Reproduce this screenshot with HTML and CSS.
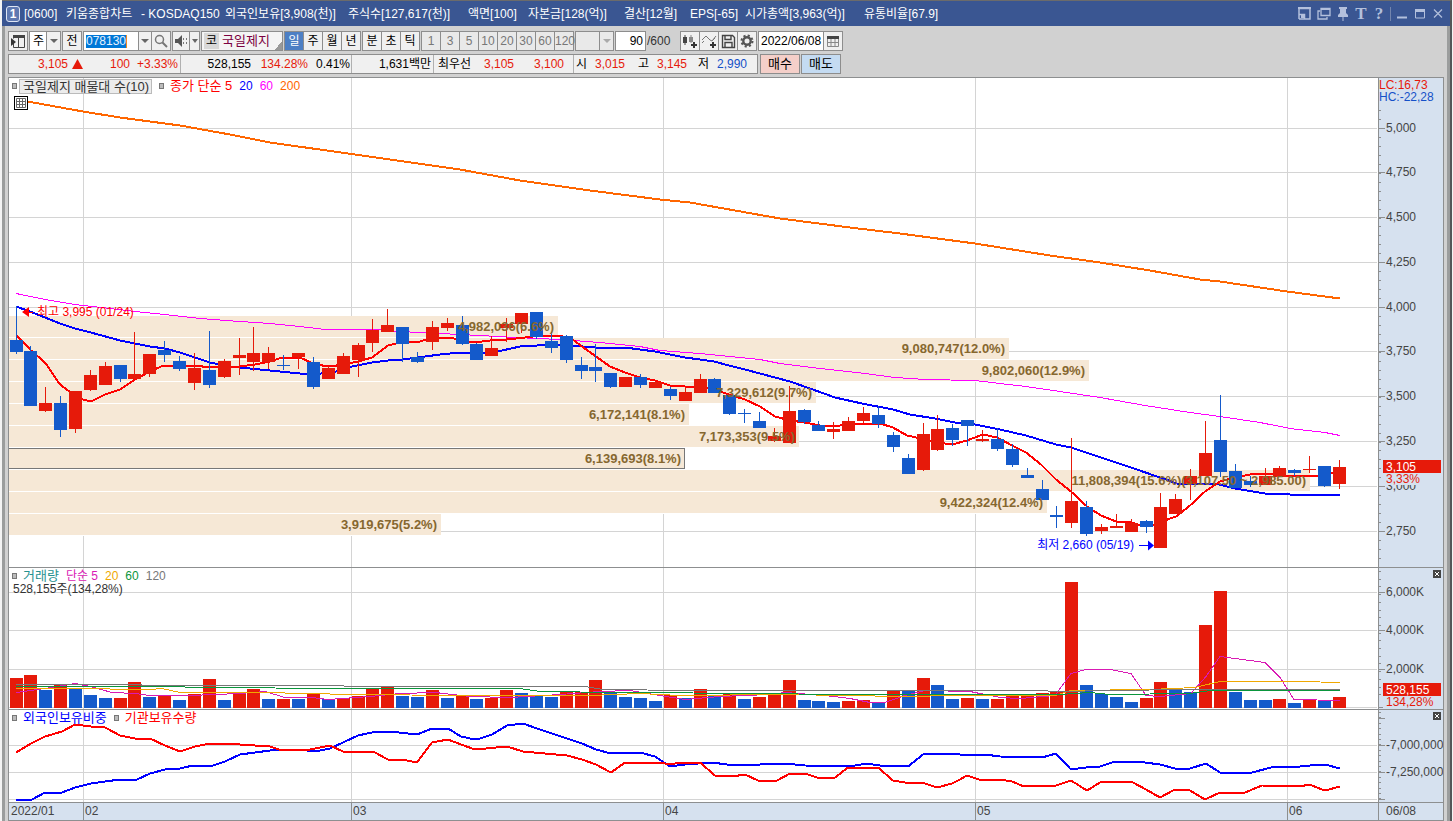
FILE: index.html
```html
<!DOCTYPE html>
<html lang="ko">
<head>
<meta charset="utf-8">
<title>키움종합차트</title>
<link rel="stylesheet" href="styles.css">
</head>
<body>
<div class="window">
  <header class="titlebar">
    <span class="win-no">1</span>
    <h1 class="title">
      <span>[0600]</span><span>키움종합차트</span><span>- KOSDAQ150</span><span>외국인보유[3,908(천)]</span><span>주식수[127,617(천)]</span><span>액면[100]</span><span>자본금[128(억)]</span><span>결산[12월]</span><span>EPS[-65]</span><span>시가총액[3,963(억)]</span><span>유통비율[67.9]</span>
    </h1>
    <div class="win-tools">
      <button aria-label="도킹"><svg width="13" height="13"><path d="M1 12V1.500H12V12H6.500M1 7.500H6.500V12H1" fill="none" stroke="currentColor" stroke-width="1.5"/><path d="M0 0h13v2H0zM3 8h3v3H3z" fill="currentColor"/></svg></button>
      <button aria-label="창 복제"><svg width="14" height="13"><path d="M4 1.5h9v7H4zM3 4H1v8h9v-2" fill="none" stroke="currentColor" stroke-width="1.3"/><path d="M4 1h9v2H4z" fill="currentColor"/></svg></button>
      <button aria-label="고정"><svg width="12" height="14"><path d="M2 0h8v2H9v4l2 2v2H1V8l2-2V2H2zM5.5 10h1v4h-1z" fill="currentColor"/></svg></button>
      <button class="glyph" aria-label="글꼴">T</button>
      <button class="glyph" aria-label="도움말">?</button>
      <i class="split"></i>
      <button aria-label="최소화"><svg width="12" height="13"><path d="M1 9.5h10v2H1z" fill="currentColor"/></svg></button>
      <button aria-label="최대화"><svg width="12" height="13"><path d="M1.5 3h9v8h-9z" fill="none" stroke="currentColor"/><path d="M1 2h10v3H1z" fill="currentColor"/></svg></button>
      <button aria-label="닫기"><svg width="12" height="13"><path d="M2 2.5l8 8M10 2.5l-8 8" stroke="currentColor" stroke-width="1.2"/></svg></button>
    </div>
  </header>

  <main class="content">
    <div class="toolbar">
      <div class="row">
        <button class="btn w20" aria-label="목록 열기"><svg width="16" height="14"><path d="M3.5 9v4.500h11v-12h-11v3M8.500 3v10" fill="none" stroke="#444"/><path d="M3 1h12v3H3z" fill="#444"/><path d="M1 4l5 4-5 4z" fill="#333"/></svg></button>
        <span class="combo w31"><select aria-label="종목 구분"><option>주</option></select><i class="arrow"></i></span>
        <button class="btn w20">전</button>
        <div class="group">
          <label class="code"><input type="text" value="078130" aria-label="종목코드"></label>
          <button class="btn w14" aria-label="종목 목록"><i class="tri"></i></button>
          <button class="btn w20" aria-label="검색"><svg width="14" height="14"><circle cx="5.5" cy="5.5" r="4" fill="none" stroke="#777" stroke-width="1.5"/><path d="M8.5 8.5l4.500 4.500" stroke="#777" stroke-width="2"/></svg></button>
        </div>
        <div class="group">
          <button class="btn w18" aria-label="음성"><svg width="14" height="12"><path d="M1 4h3l4-4v12L4 8H1z" fill="#555"/><path d="M9 3h1v2H9zM9 7h1v2H9zM12 3h1v2h-1zM12 7h1v2h-1z" fill="#777"/></svg></button>
          <button class="btn w11" aria-label="음성 설정"><i class="tri small"></i></button>
        </div>
        <div class="stock"><span class="market">코</span><span class="name">국일제지</span></div>
        <div class="group">
          <button class="btn w20 on">일</button><button class="btn w20">주</button><button class="btn w20">월</button><button class="btn w20">년</button>
        </div>
        <div class="group">
          <button class="btn w20">분</button><button class="btn w20">초</button><button class="btn w20">틱</button>
        </div>
        <div class="group nums">
          <button class="btn w20" disabled>1</button><button class="btn w20" disabled>3</button><button class="btn w20" disabled>5</button><button class="btn w20" disabled>10</button><button class="btn w20" disabled>20</button><button class="btn w20" disabled>30</button><button class="btn w20" disabled>60</button><button class="btn w20" disabled>120</button>
        </div>
        <span class="combo w39 off"><select aria-label="주기" disabled><option></option></select><i class="arrow"></i></span>
        <label class="count"><input type="text" value="90" aria-label="표시 개수"><span>/600</span></label>
        <div class="group">
          <button class="btn w20" aria-label="차트 유형 추가"><svg width="16" height="15"><path d="M1 3h4v6H1zM2.500 1h1v10h-1z" fill="#444"/><path d="M7 3h4v5H7zM8.500 1h1v8h-1z" fill="#888"/><path d="M9 10h6v2H9zM11 8h2v6h-2z" fill="#333"/></svg></button>
          <button class="btn w20" aria-label="지표 추가"><svg width="16" height="15"><path d="M1 6l4-4 4 4 2 1 4-5M1 9l2-2M12 6l2-2" fill="none" stroke="#777"/><path d="M9 10h6v2H9zM11 8h2v6h-2z" fill="#333"/></svg></button>
          <button class="btn w20" aria-label="저장"><svg width="15" height="15"><path d="M1.500 1.500h10l2 2v10h-12zM4 1.500v4h6v-4M4 13.500v-5h7v5" fill="none" stroke="#444" stroke-width="1.400"/></svg></button>
          <button class="btn w20" aria-label="설정"><svg width="14" height="14"><circle cx="7" cy="7" r="3.700" fill="none" stroke="#555" stroke-width="2.400"/><circle cx="7" cy="7" r="5.500" fill="none" stroke="#555" stroke-width="2" stroke-dasharray="2.160 2.160"/></svg></button>
        </div>
        <div class="group">
          <input class="date" type="text" value="2022/06/08" aria-label="기준일">
          <button class="btn w20" aria-label="달력"><svg width="12" height="12"><path d="M.5 1.500h11v10H.5zM4 4v8M8 4v8M1 7.500h11" fill="none" stroke="#888"/><path d="M0 1h12v3H0z" fill="#444"/></svg></button>
        </div>
      </div>
      <div class="row">
        <div class="quote">
          <div class="cell c1"><span class="up">3,105</span><svg width="11" height="10"><path d="M5.500 0L11 10H0z" fill="#e61a0a"/></svg><span class="up">100</span><span class="up">+3.33%</span></div>
          <div class="cell c2"><span>528,155</span><span class="up">134.28%</span><span>0.41%</span></div>
          <div class="cell c3"><span>1,631백만</span></div>
          <div class="cell c4"><span>최우선</span><span class="up">3,105</span><span class="up">3,100</span></div>
          <div class="cell c5"><span>시</span><span class="up">3,015</span><span>고</span><span class="up">3,145</span><span>저</span><span class="down">2,990</span></div>
        </div>
        <button class="btn trade buy">매수</button>
        <button class="btn trade sell">매도</button>
      </div>
    </div>

    <div class="chart">
      <section class="plot">
        <svg id="price"></svg>
        <div class="legend">
          <i class="mark"></i><span class="boxed">국일제지 매물대 수(10)</span><i class="mark"></i><span class="l-red">종가 단순 5</span><span class="l-blue">20</span><span class="l-pink">60</span><span class="l-orange">200</span>
        </div>
        <button class="table-btn" aria-label="표 보기"><svg width="10" height="10"><path d="M.5.5h9v9h-9zM.5 3.500h9M.5 6.500h9M3.500.5v9M6.500.5v9" fill="none" stroke="#666"/></svg></button>
      </section>
      <aside class="axis">
        <svg id="price-axis"></svg>
        <div class="lchc"><span class="up">LC:16,73</span><span class="down">HC:-22,28</span></div>
      </aside>

      <section class="plot">
        <svg id="volume"></svg>
        <div class="legend">
          <i class="mark"></i><span class="l-teal">거래량</span><span class="l-mag">단순 5</span><span class="l-gold">20</span><span class="l-green">60</span><span class="l-gray">120</span>
        </div>
        <div class="volume-now">528,155주(134,28%)</div>
      </section>
      <aside class="axis"><svg id="volume-axis"></svg><button class="close" aria-label="거래량 닫기"><svg width="8" height="8"><path d="M2 2l4 4M6 2l-4 4" stroke="#fff"/></svg></button></aside>

      <section class="plot">
        <svg id="holding"></svg>
        <div class="legend">
          <i class="mark"></i><span class="l-blue">외국인보유비중</span><i class="mark"></i><span class="l-red">기관보유수량</span>
        </div>
      </section>
      <aside class="axis"><svg id="holding-axis"></svg><button class="close" aria-label="보유 지표 닫기"><svg width="8" height="8"><path d="M2 2l4 4M6 2l-4 4" stroke="#fff"/></svg></button></aside>

      <div class="time"><svg id="time"></svg></div>
      <div class="axis now">06/08</div>
    </div>
  </main>
</div>
<script src="chart.js"></script>
</body>
</html>
```
FILE: styles.css
```css
* { box-sizing: border-box; }

body {
  margin: 0;
  background: #f4f4f4;
  font: 12px/14px "Liberation Sans", "Noto Sans CJK KR", sans-serif;
  color: #000;
}

button, input, select { font: inherit; color: inherit; margin: 0; padding: 0; border-radius: 0; }
svg { display: block; }

.window { display: flex; flex-direction: column; height: 100vh; margin: 0 1px 0 2px; border-top: 1px solid #6b6b6b; border-right: 2px solid #55575a; }

.titlebar { display: flex; align-items: center; flex: none; height: 25px; padding: 0 5px 0 4px; background: #3a5692; color: #fff; }
.win-no { width: 14px; height: 16px; border: 1px solid #dfe6f4; border-radius: 3px; background: #5f79b1; font-weight: bold; text-align: center; }
.title { display: grid; grid-template-columns: 42px 75px 84px 123px 120px 60px 96px 66px 55px 119px auto; flex: 1; margin: 0; padding-left: 4px; font-size: 12px; font-weight: normal; line-height: 20px; white-space: nowrap; }
.win-tools { display: flex; align-items: center; gap: 4px; color: #b3c0dc; }
.win-tools button { display: grid; place-items: center; width: 14px; height: 18px; border: 0; background: none; }
.win-tools button:nth-child(-n+2) { width: 16px; }
.win-tools .glyph { font: bold 17px/18px "Liberation Serif", serif; }
.split { width: 1px; height: 14px; background: #7385ad; }

.content { display: flex; flex-direction: column; flex: 1; min-height: 0; background: #d1d1d1; border: solid #9b9d9d; border-width: 0 3px; }

.toolbar { display: flex; flex-direction: column; gap: 3px; padding: 5px 3px 3px; }
.row { display: flex; gap: 1px; height: 20px; }
.group { display: flex; }
.group .btn + .btn { margin-left: -1px; }

.btn { display: grid; place-items: center; height: 20px; border: 1px solid #8d8d8d; background: #f0f0f0; }
.btn:disabled { color: #777; background: #e9e9e9; }
.btn.on { background: #4d7fc4; color: #fff; }
.w11 { width: 11px; }
.w14 { width: 14px; }
.w18 { width: 18px; }
.w20 { width: 20px; }
.w31 { width: 32px; }
.w39 { width: 39px; }

.combo { position: relative; height: 20px; border: 1px solid #8d8d8d; background: #fff; }
.combo select { width: 100%; height: 18px; padding-left: 3px; border: 0; background: none; appearance: none; }
.combo .arrow { position: absolute; top: 0; right: 0; width: 14px; height: 18px; border-left: 1px solid #8d8d8d; background: #f0f0f0; pointer-events: none; }
.combo .arrow::after, .tri { content: ""; display: block; width: 0; border: 4px solid transparent; border-top-color: #666; border-bottom: 0; }
.combo .arrow::after { margin: 7px 0 0 3px; }
.combo.off, .combo.off .arrow { background: #e9e9e9; }
.combo.off .arrow::after { border-top-color: #aaa; }
.tri.small { border-width: 4px 3px 0; }

.code { width: 55px; height: 20px; padding: 3px 2px; border: 1px solid #8d8d8d; border-right: 0; background: #fff; }
.code input { display: block; width: 41px; height: 13px; border: 0; border-right: 1px solid #f08a24; background: #0078d7; color: #e6f2ff; line-height: 13px; }

.stock { display: flex; align-items: center; gap: 3px; width: 82px; height: 20px; padding-left: 2px; border: 1px solid #8d8d8d; background: linear-gradient(135deg, transparent 50%, #999 50%) right bottom / 8px 8px no-repeat #f4f4f4; }
.market { width: 15px; height: 16px; background: #d8d8d8; text-align: center; line-height: 16px; }
.name { color: #7c0040; font-size: 13px; }

.count { display: flex; align-items: center; gap: 1px; width: 64px; color: #333; }
.count input { width: 31px; height: 20px; padding-right: 2px; border: 1px solid #8d8d8d; background: #fff; color: #000; text-align: right; }
.date { width: 65px; height: 20px; padding-left: 2px; border: 1px solid #8d8d8d; border-right: 0; background: #fff; }

.quote { display: flex; width: 750px; height: 20px; margin-right: 1px; border: 1px solid #8d8d8d; background: #f0f0f0; }
.cell { display: grid; align-items: center; justify-items: end; border-right: 1px solid #b0b0b0; white-space: nowrap; }
.cell:last-child { border-right: 0; }
.c1 { grid-template-columns: 59px 15px 47px 48px; width: 172px; }
.c2 { grid-template-columns: 70px 57px 42px; width: 171px; }
.c3 { grid-template-columns: 79px; width: 82px; }
.c4 { grid-template-columns: 37px 43px 50px; width: 140px; }
.c5 { grid-template-columns: 13px 38px 24px 38px 22px 38px; }
.up { color: #e61a0a; }
.down { color: #1450c8; }
.trade { width: 40px; font-size: 13px; }
.buy { background: #f4cfc9; }
.sell { background: #c4dbf2; }

.chart { display: grid; grid-template-columns: 1fr 65px; grid-template-rows: 490fr 142fr 93fr 18px; flex: 1; min-height: 0; margin: 0 3px; border: solid #8d8f90; border-width: 0 1px 1px; background: #fff; }
.plot, .axis, .time { position: relative; min-width: 0; min-height: 0; border-top: 1px solid #8d8f90; }
.plot > svg, .axis > svg, .time > svg { position: absolute; inset: 0; width: 100%; height: 100%; }
.axis { border-left: 1px solid #8d8f90; background: #d6e1ef; }
.time { background: #d6e1ef; }
.now { padding: 1px 0 0 7px; color: #444; }

.legend { position: absolute; top: 1px; left: 3px; display: flex; align-items: center; gap: 7px; height: 14px; white-space: nowrap; }
.legend .mark + span { font-size: 13px; margin-left: -1px; }
.mark { width: 5px; height: 6px; border: 1px solid #777; background: #bbb; }
.legend .mark + .boxed { margin-left: -5px; height: 15px; padding: 0 2px 0 3px; border: 1px solid #bbb; background: #ececec; color: #333; line-height: 13px; }
.l-red { color: #f00; }
.l-blue { color: #00f; }
.l-pink { color: #f0f; }
.l-orange { color: #f60; }
.l-teal { color: #26918f; }
.l-mag { color: #d91ab4; }
.l-gold { color: #f0a800; }
.l-green { color: #0a963c; }
.l-gray { color: #777; }
.volume-now { position: absolute; top: 14px; left: 4px; color: #333; }

.table-btn { position: absolute; top: 18px; left: 5px; display: grid; place-items: center; width: 14px; height: 14px; border: 1px solid #000; background: #fff; }
.lchc { position: absolute; top: 1px; left: 0; display: flex; flex-direction: column; line-height: 12px; }
.close { position: absolute; top: 2px; right: 2px; width: 8px; height: 8px; border: 0; background: #444; }

.axis-text { fill: #444; }
.band-text { fill: #86672f; font-size: 13px; font-weight: bold; text-anchor: end; }
.grid { fill: #d4d4d4; }
.ticks { fill: #8d8f90; }
.line { fill: none; }
svg rect, svg .line { shape-rendering: crispEdges; }
```
FILE: chart.js
```js
const NS = 'http://www.w3.org/2000/svg';
const LEFT = 9, WIDTH = 1369, PITCH = 14.87;
const RED = '#e61a0a', BLUE = '#145acb';

// Colour, high, body top, body bottom, low
const candles = `B306,340,352,354 B346,351,406,406 R387,403,411,412 B396,403,430,437 R391,391,429,433 R370,375,390,391 R362,366,385,385 B365,365,379,382 R332,374,379,379 R354,354,374,377
B341,350,355,362 B356,361,369,371 R353,368,383,390 B331,370,385,388 R359,361,377,378 R338,355,358,375 R327,353,362,371 R347,353,362,369 B355,365,366,370 R353,353,357,369
B357,362,387,389 R366,368,379,379 R353,356,374,374 R343,345,360,377 R319,330,343,352 R309,325,332,332 B327,327,344,362 B352,357,362,363 R321,327,342,350 R318,323,328,331
B316,325,344,345 B343,344,360,360 R336,348,356,356 R318,324,328,342 R313,313,324,333 B312,312,337,339 B332,341,348,353 B335,336,360,363 B357,365,371,379 B344,367,371,382
B373,373,387,388 R377,377,387,387 B374,377,385,388 R381,382,388,388 B387,389,396,400 R387,392,401,401 R374,379,393,393 B378,379,393,393 B395,395,414,415 B409,413,414,423
B412,421,428,428 R428,436,441,442 R386,411,443,443 B409,410,422,424 B421,425,431,431 R422,429,432,439 R417,421,431,431 R407,413,421,423 B406,415,424,428 B432,435,447,452
B454,458,474,474 R423,434,470,471 R415,429,450,451 B424,428,440,446 B420,420,426,446 R430,439,441,442 B428,439,449,451 B444,449,465,467 B468,475,478,478 B480,489,500,500
B506,515,517,528 R438,501,523,528 B501,507,534,536 R524,527,531,534 R514,526,528,528 R519,523,532,532 B520,521,527,533 R493,507,548,548 R494,499,514,514 R469,476,484,500
R421,453,476,476 B395,440,472,477 B464,471,488,488 B476,481,485,487 R468,476,485,485 R466,468,477,477 B469,470,473,476 R456,469,470,473 B466,466,486,487 R460,467,484,489`.split(/\s+/);

const volumes = `R678 R675 B690 R685 B689 B695 B698 R698 R682 B697 R695 B700 R694 R679 B700 R692 R689 B699 R699 B699 R693 B699 R698 R696 R689 R687 B696 B697 R690 B698
R695 B699 R698 R690 B693 B696 B697 R692 R692 R680 B692 B697 B698 B701 R695 B698 R689 B696 R693 B699 R697 R695 R680 B700 B701 B702 R701 R700 B702 R691
B691 R678 B685 B699 R698 B699 R699 R696 R696 R693 R692 R582 B685 B694 B697 B702 R698 R682 B690 B692 R625 R591 B692 B700 B700 R699 B703 R699 B701 R697`.split(/\s+/);

// Volume profile: right edge and label of each price band
const bands = [
  [558, '4,982,036(6.6%)'], [1009, '9,080,747(12.0%)'], [1089, '9,802,060(12.9%)'], [816, '7,329,612(9.7%)'],
  [689, '6,172,141(8.1%)'], [799, '7,173,353(9.5%)'], [685, '6,139,693(8.1%)'],
  [1310, '11,808,394(15.6%)(3,107.50 ~ 2,985.00)'], [1047, '9,422,324(12.4%)'], [441, '3,919,675(5.2%)']
];

const ma200 = '28,101 55,106 83,111 120,117 150,121 180,125 230,134 270,142 355,154 460,169 520,180 590,190 660,199 690,202 780,218 850,227 900,233 975,243 1050,255 1100,262 1150,270 1200,279 1220,281 1287,291 1340,298';
const ma60 = '16,293 45,299 75,304 110,308 135,311 165,314 200,318 240,321 270,323 300,326 325,329 375,329 400,331 440,333 480,335 515,337 560,339 600,342 640,346 660,350 700,353 740,357 760,359 780,363 820,368 865,373 895,377 925,379 975,380 1000,383 1026,386 1060,391 1100,397 1145,405 1190,412 1220,416 1260,422 1290,428 1325,432 1340,435';
const ma20 = '16,306 30,311 45,317 60,323 75,328 91,332 120,340 150,346 165,348 180,352 195,357 210,362 230,366 250,368 270,370 300,373 312,374 330,372 343,370 352,366 372,362 388,360 402,359 425,356 440,354 460,352 487,352 502,350 520,346 537,345 560,344 595,347 625,347 655,351 670,354 685,357 700,359 714,361 729,365 745,369 760,373 775,377 790,381 810,388 835,397 862,403 893,409 910,414 935,418 955,422 975,424 1000,429 1026,435 1056,444 1071,447 1101,457 1131,467 1160,477 1180,484 1215,483 1235,488 1265,493 1290,494 1325,495 1340,494';
const ma5 = '16,334 31,350 45,362 60,384 75,395 83,399 91,401 105,394 120,389 135,379 150,371 161,366 180,365 195,365 210,367 240,366 255,364 270,361 282,357 300,357 315,364 330,366 343,364 358,361 372,357 388,345 400,342 420,341 430,338 440,337 450,337 463,340 475,342 490,340 507,339 525,337 542,335 558,335 567,337 574,340 582,346 596,356 610,366 625,372 640,377 655,380 670,385 685,386 700,386 714,389 729,394 745,399 760,406 775,416 790,420 805,422 820,425 840,425 855,423 880,423 893,427 907,435 921,438 938,442 952,444 967,440 983,434 997,437 1012,445 1026,452 1041,464 1056,479 1071,491 1087,506 1101,515 1116,521 1131,522 1145,526 1156,524 1170,518 1176,516 1190,505 1205,491 1220,481 1235,477 1250,474 1275,473 1290,476 1320,475 1340,471';

const vGray = '16,684 38,684 245,685 440,686 585,686 603,689 690,690 1035,690 1060,691 1110,690 1190,689 1340,689';
const vGreen = '16,686 140,686 320,688 520,688 540,691 620,692 765,693 830,694 1060,694 1090,692 1110,694 1190,693 1210,690 1340,690';
const vGold = '16,688 100,688 120,689 150,689 162,688 180,692 270,692 300,693 320,693 340,694 480,695 590,695 640,693 680,695 780,694 850,695 900,696 960,695 1055,695 1071,690 1150,689 1195,687 1220,681 1300,681 1340,682';
const vMag = '16,692 45,688 75,683 90,686 112,692 135,693 150,695 190,695 240,693 265,691 285,697 312,697 328,699 370,696 400,693 435,692 470,696 510,697 560,694 600,691 630,690 660,695 685,699 720,696 770,694 785,692 825,695 850,698 870,702 885,702 905,695 925,690 970,691 1000,697 1020,698 1055,695 1071,673 1086,669 1110,669 1131,673 1146,695 1160,696 1191,693 1206,676 1220,656 1235,658 1265,662 1280,677 1294,699 1340,700';

const foreign = '16,799 32,799 45,792 62,792 75,787 91,783 105,781 120,779 135,780 150,773 165,769 180,768 193,765 210,766 225,761 240,754 270,750 300,749 315,751 330,748 343,742 358,735 372,732 390,731 417,734 432,728 448,728 461,736 475,739 480,738 492,734 507,725 523,723 537,728 567,738 582,743 596,749 611,753 640,752 655,756 670,766 685,764 712,762 727,764 760,764 785,763 805,765 850,766 866,763 880,765 908,766 923,754 940,753 960,754 985,754 1000,756 1042,757 1056,753 1071,769 1086,767 1100,766 1115,761 1145,762 1160,764 1175,768 1190,768 1206,763 1220,772 1252,772 1275,766 1300,766 1320,764 1325,764 1340,768';
const institution = '16,752 31,743 45,736 62,731 75,724 91,726 105,727 120,735 135,738 150,738 165,745 180,751 195,746 210,743 240,744 270,746 282,750 310,749 330,745 343,751 355,752 373,751 388,759 402,759 417,762 432,742 448,739 461,744 475,749 507,746 523,751 545,753 567,755 582,759 596,764 611,772 625,762 660,762 670,764 680,762 700,762 715,775 732,776 745,774 758,780 777,780 790,773 805,773 817,777 835,777 848,767 878,767 893,780 905,782 922,782 937,787 952,783 960,779 967,775 982,780 1000,779 1012,781 1024,786 1056,785 1071,780 1087,790 1100,782 1131,781 1146,789 1160,797 1175,789 1190,790 1205,799 1220,792 1245,792 1262,785 1300,786 1309,784 1325,790 1340,786';

const months = [['2022/01', 0], ['02', 5], ['03', 23], ['04', 44], ['05', 65], ['06', 86]];

function panel(id, origin, height) {
  const svg = document.getElementById(id);
  svg.replaceChildren();
  const box = svg.getBoundingClientRect();
  const kx = box.width / WIDTH, ky = box.height / height;
  const add = (tag, attrs, text) => {
    const el = document.createElementNS(NS, tag);
    for (const key in attrs) el.setAttribute(key, attrs[key]);
    if (text) el.textContent = text;
    svg.appendChild(el);
    return el;
  };
  const X = x => (x - LEFT) * kx;
  const Y = y => Math.round((y - origin) * ky);
  const rect = (x, y, width, h, attrs) => add('rect', { x: Math.round(x), y, width: Math.round(width), height: h, ...attrs });
  const line = (data, stroke, width) => add('polyline', {
    class: 'line', stroke, 'stroke-width': width,
    points: data.split(' ').map(p => { const [x, y] = p.split(',').map(Number); return X(x) + ',' + (y - origin + 0.5) * ky; }).join(' ')
  });
  const slot = i => Math.floor((1 + PITCH * i) * kx);
  const grid = ys => {
    ys.forEach(y => rect(0, Y(y), box.width - 1, 1, { class: 'grid' }));
    months.slice(1).forEach(m => rect(slot(m[1]) - 1, 0, 1, box.height, { class: 'grid' }));
  };
  return { add, X, Y, rect, line, slot, grid, kx, ky, box };
}

function axis(id, origin, height, labels, step, from, to) {
  const a = panel(id, origin, height);
  for (let y = from; y < to; y += step) a.rect(0, a.Y(y), 2, 1, { class: 'ticks' });
  labels.forEach(([y, text]) => {
    a.rect(0, a.Y(y), 6, 1, { class: 'ticks' });
    if (text) a.add('text', { x: 7, y: a.Y(y) + 4, class: 'axis-text' }, text);
  });
  return a;
}

function tag(a, y, value, percent) {
  a.rect(4, a.Y(y), 58, 25, { fill: '#d6e1ef' });
  a.rect(4, a.Y(y), 58, 13, { fill: RED });
  a.add('text', { x: 7, y: a.Y(y) + 11, fill: '#fff' }, value);
  a.add('text', { x: 7, y: a.Y(y) + 23, fill: RED }, percent);
}

function draw() {
  const levels = [128, 172, 217, 262, 307, 351, 396, 441, 486, 531];
  const p = panel('price', 78, 489);
  p.grid(levels);
  bands.forEach(([right], i) => {
    const y = p.Y(316 + 22 * i), next = p.Y(338 + 22 * i), w = p.X(right);
    p.rect(0, y, w, next - y, { fill: '#fff' });
    p.rect(0, y, w, next - y - 1, { fill: '#f6e8d6' });
    if (i === 6) p.add('rect', { x: -1.5, y: y + 0.5, width: Math.round(w) + 1, height: next - y - 2, fill: 'none', stroke: '#777' });
  });
  p.line(ma200, '#f60', 2);
  p.line(ma60, '#f0f', 1);
  p.line(ma20, '#00f', 2);
  p.line(ma5, '#f00', 2);
  const w = Math.max(3, Math.round(13 * p.kx));
  candles.forEach((c, i) => {
    const fill = c[0] === 'R' ? RED : BLUE;
    const [high, top, bottom, low] = c.slice(1).split(',').map(p.Y);
    p.rect(p.slot(i) + (w - 1) / 2, high, 1, low - high, { fill });
    p.rect(p.slot(i), top, w, Math.max(1, bottom - top), { fill });
  });
  bands.forEach(([right, text], i) => p.add('text', { x: p.X(right - 4), y: p.Y(331 + 22 * i), class: 'band-text' }, text));
  p.add('path', { d: `M${p.X(22)} ${p.Y(312)}l7-5v10z`, fill: '#f00' });
  p.rect(p.X(28), p.Y(312), 5, 1, { fill: '#f00' });
  p.add('text', { x: p.X(37), y: p.Y(316), fill: '#f00' }, '최고 3,995 (01/24)');
  p.add('text', { x: p.X(1134), y: p.Y(549), fill: '#00f', 'text-anchor': 'end' }, '최저 2,660 (05/19)');
  p.rect(p.X(1139), p.Y(545), 10, 1, { fill: '#00f' });
  p.add('path', { d: `M${p.X(1154)} ${p.Y(545) + 0.5}l-6-5v10z`, fill: '#00f' });

  const names = ['5,000', '4,750', '4,500', '4,250', '4,000', '3,750', '3,500', '3,250', '3,000', '2,750'];
  tag(axis('price-axis', 78, 489, levels.map((y, i) => [y, names[i]]), 8.96, 110, 566), 460, '3,105', '3,33%');

  const v = panel('volume', 568, 141);
  v.grid([592, 630, 669, 707]);
  volumes.forEach((d, i) => {
    const y = v.Y(+d.slice(1));
    v.rect(v.slot(i), y, w, v.Y(708) - y, { fill: d[0] === 'R' ? RED : BLUE });
  });
  v.line(vMag, '#d91ab4', 1);
  v.line(vGold, '#f0a800', 1);
  v.line(vGreen, '#0a963c', 1);
  v.line(vGray, '#777', 1);
  tag(axis('volume-axis', 568, 141, [[592, '6,000K'], [630, '4,000K'], [669, '2,000K'], [707, '']], 7.7, 571, 700), 683, '528,155', '134,28%');

  const h = panel('holding', 710, 92);
  h.grid([745, 772, 799]);
  h.line(foreign, '#00f', 2);
  h.line(institution, '#f00', 2);
  axis('holding-axis', 710, 92, [[718, ''], [745, '-7,000,000'], [772, '-7,250,000'], [799, '']], 5.4, 712, 799);

  const t = panel('time', 803, 17);
  months.forEach(([text, i]) => {
    const x = i ? t.slot(i) - 1 : 0;
    if (i) t.rect(x, 0, 1, t.box.height, { class: 'ticks' });
    t.add('text', { x: x + 2, y: 12, class: 'axis-text' }, text);
  });
}

draw();
addEventListener('resize', draw);
```
